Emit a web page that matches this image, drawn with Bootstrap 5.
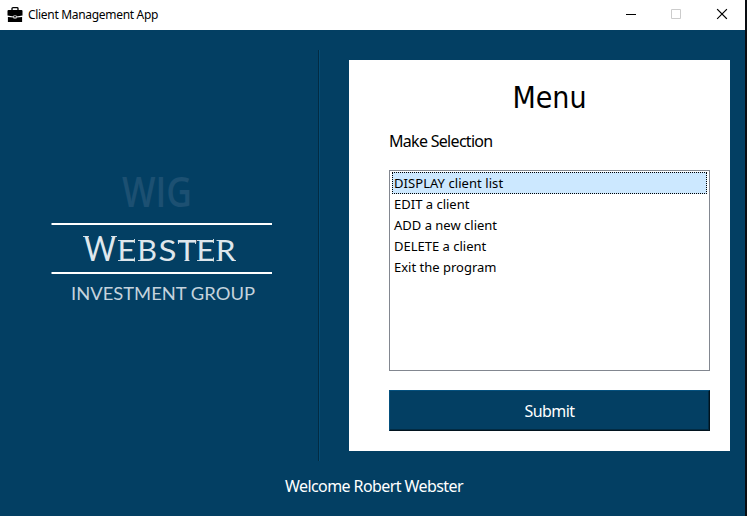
<!DOCTYPE html>
<html lang="en">
<head>
<meta charset="utf-8">
<meta name="viewport" content="width=device-width, initial-scale=1">
<title>Client Management App</title>
<link href="https://cdn.jsdelivr.net/npm/bootstrap@5.3.0/dist/css/bootstrap.min.css" rel="stylesheet">
<style>
  :root { --navy: #033f63; }
  body { font-family: "Noto Sans", "Open Sans", sans-serif; color: #000; background: #090d12; height: 516px; }
  .app-window { width: 745px; height: 516px; background: var(--navy); }
  .titlebar { height: 30px; padding: 0 1px 0 7px; font-size: 12px; letter-spacing: -.31px; line-height: 30px; }
  .titlebar svg { display: block; }
  .app-name { margin-left: 5px; }
  .win-btn { width: 45px; height: 30px; }
  .main-area { height: 430px; }
  .brand-pane { width: 318px; padding: 120px 0 0 50px; }
  .divider { width: 2px; height: 411px; margin-top: 20px; border-left: 1px solid #022b43; border-right: 1px solid #044c76; }
  .menu-panel { width: 381px; height: 391px; margin: 30px 0 0 29px; padding: 18px 20px 20px 40px; }
  .menu-title { font-family: "DejaVu Sans Condensed", "DejaVu Sans", sans-serif; font-stretch: condensed; font-size: 30px; line-height: 40px; }
  .prompt { font-size: 16px; line-height: 24px; margin-top: 11px; letter-spacing: -.7px; }
  .choices { height: 201px; margin-top: 17px; padding: 1px 2px 0 2px; border: 1px solid #828790; }
  .choices .list-group-item { height: 21px; padding: 0 2px; font-size: 13px; line-height: 20px; color: #000; border: 0; letter-spacing: 0; }
  .choices .list-group-item.active { height: 22px; line-height: 21px; padding: 0 1px; background: #cce8ff; border: 1px dotted #000; letter-spacing: .06px; }
  .submit { height: 41px; margin-top: 19px; padding: 0; font-size: 16px; letter-spacing: -.55px; color: #fff; background: var(--navy); border: 1px solid; border-color: #04507e #01131e #01131e #04507e; box-shadow: inset -1px -1px #022b43; }
  .welcome { padding: 14px 0 0 3px; font-size: 16px; line-height: 24px; letter-spacing: -.58px; }
</style>
<script src="https://cdn.jsdelivr.net/npm/bootstrap@5.3.0/dist/js/bootstrap.bundle.min.js"></script>
</head>
<body class="overflow-hidden">
<div class="app-window">
  <header class="titlebar d-flex align-items-center bg-white">
    <svg width="16" height="16" viewBox="0 0 16 16" aria-hidden="true">
      <path d="M5 3V1.500Q5 .7 6 .7h4q1 0 1 .8V3" fill="none" stroke="#000" stroke-width="1.3"/>
      <path d="M1.500 3h13q1 0 1 1V8.500L9.500 9.500V8.500h-3v1L.5 8.500V4q0-1 1-1zM.9 10l5.600.5v1h3v-1L15.100 10V15H.9z"/>
      <path d="M7 9h2v1.500H7z" fill="#333"/>
    </svg>
    <span class="app-name">Client Management App</span>
    <div class="d-flex ms-auto">
      <span class="win-btn"><svg width="45" height="30"><path d="M17 14.500h10" stroke="#000"/></svg></span>
      <span class="win-btn"><svg width="45" height="30"><path d="M17.500 9.500h9v9h-9z" fill="none" stroke="#ccc"/></svg></span>
      <span class="win-btn"><svg width="45" height="30"><path d="M18.500 9.500l9 9m0-9l-9 9" stroke="#000" stroke-width="1.1" stroke-linecap="square"/></svg></span>
    </div>
  </header>
  <main class="main-area d-flex">
    <section class="brand-pane">
      <svg class="d-block" width="224" height="164" viewBox="50 150 224 164" role="img" aria-label="Webster Investment Group">
        <text x="122" y="207" font-family="Open Sans" font-weight="600" font-size="42" textLength="70" lengthAdjust="spacingAndGlyphs" fill="#1c5072">WIG</text>
        <path d="M51.500 224H272M51.500 273H272" stroke="#fff" stroke-width="2"/>
        <text y="261" font-family="Lato" font-size="29.500" fill="#dfe7ed"><tspan x="84" font-size="35" textLength="32" lengthAdjust="spacingAndGlyphs">W</tspan><tspan x="117.500" textLength="18" lengthAdjust="spacingAndGlyphs">E</tspan><tspan x="137.500" textLength="19.500" lengthAdjust="spacingAndGlyphs">B</tspan><tspan x="158.500" textLength="18" lengthAdjust="spacingAndGlyphs">S</tspan><tspan x="177.500" textLength="19" lengthAdjust="spacingAndGlyphs">T</tspan><tspan x="196.500" textLength="18" lengthAdjust="spacingAndGlyphs">E</tspan><tspan x="216" textLength="19.500" lengthAdjust="spacingAndGlyphs">R</tspan></text>
        <path d="M83 236.500h6M111 236.500h6M118 240.500h3M118 260.500h3M134.500 239v4M134.500 257.500v4M138 240.500h3M138 260.500h3M178.500 240v4M195.500 240v4M184.500 260.500h5M197 240.500h3M197 260.500h3M213.500 239v4M213.500 257.500v4M216.500 240.500h3M216.500 260.500h5M232 260.500h4" fill="none" stroke="#dfe7ed" stroke-width=".9"/>
        <text x="71" y="300" font-family="Lato" font-size="18" textLength="184" lengthAdjust="spacingAndGlyphs" fill="#c5d3dd">INVESTMENT GROUP</text>
      </svg>
    </section>
    <div class="divider"></div>
    <section class="menu-panel d-flex flex-column bg-white">
      <h1 class="menu-title text-center fw-normal mb-0">Menu</h1>
      <div class="prompt"><span>Make Selection</span></div>
      <div class="choices">
        <div class="list-group list-group-flush">
          <div class="list-group-item active">DISPLAY client list</div>
          <div class="list-group-item">EDIT a client</div>
          <div class="list-group-item">ADD a new client</div>
          <div class="list-group-item">DELETE a client</div>
          <div class="list-group-item">Exit the program</div>
        </div>
      </div>
      <button type="button" class="submit btn rounded-0 w-100">Submit</button>
    </section>
  </main>
  <footer class="welcome text-center text-white">Welcome Robert Webster</footer>
</div>
</body>
</html>
